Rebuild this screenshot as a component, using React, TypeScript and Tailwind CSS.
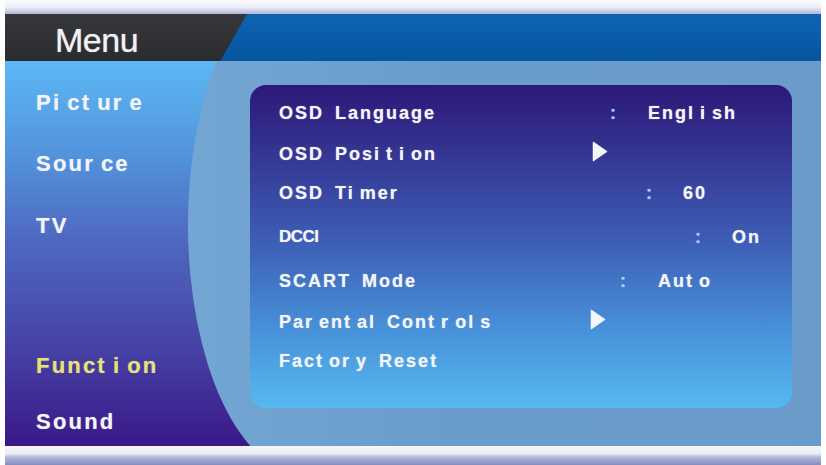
import React from 'react'

// OSD font quirk: narrow glyphs get a wider advance
function Osd({ text, gap }: { text: string; gap: string }) {
  return (
    <>
      {text.split('').map((ch, i) => {
        const next = text[i + 1]
        const wide = 'itlr'.includes(ch) && next !== undefined && next !== ' '
        return wide ? (
          <span key={i} className={gap}>
            {ch}
          </span>
        ) : (
          <React.Fragment key={i}>{ch}</React.Fragment>
        )
      })}
    </>
  )
}

function Arrow() {
  return (
    <svg width="16" height="21" viewBox="0 0 16 21" className="-mt-[5px]">
      <path d="M1.5 1.5 L14.5 10.5 L1.5 19.5 Z" fill="#f4f6fb" stroke="#f4f6fb" strokeWidth="1.5" strokeLinejoin="round" />
    </svg>
  )
}

type Row = {
  label: string
  top: string
  labelBox?: string
  colonBox?: string
  value?: string
  arrow?: boolean
  small?: boolean
}

const rows: Row[] = [
  { label: 'OSD Language', top: 'mt-0', labelBox: 'w-[331px]', colonBox: 'w-[38px]', value: 'English' },
  { label: 'OSD Position', top: 'mt-[1px]', labelBox: 'w-[313px]', arrow: true },
  { label: 'OSD Timer', top: '-mt-[1px]', labelBox: 'w-[367px]', colonBox: 'w-[37px]', value: '60' },
  { label: 'DCCI', top: 'mt-[4px]', labelBox: 'w-[416px]', colonBox: 'w-[37px]', value: 'On', small: true },
  { label: 'SCART Mode', top: 'mt-[4px]', labelBox: 'w-[341px]', colonBox: 'w-[38px]', value: 'Auto' },
  { label: 'Parental Controls', top: 'mt-[1px]', labelBox: 'w-[311px]', arrow: true },
  { label: 'Factory Reset', top: '-mt-[1px]' },
]

const sideItems = [
  { name: 'Picture', cls: 'mt-0 text-[#f3f4fa]' },
  { name: 'Source', cls: 'mt-[33px] text-[#f3f4fa]' },
  { name: 'TV', cls: 'mt-[34px] text-[#f3f4fa]' },
  { name: 'Function', cls: 'mt-[112px] text-[#e8e26e]' },
  { name: 'Sound', cls: 'mt-[28px] text-[#f3f4fa]' },
]

function App() {
  return (
    <div className="w-[826px] h-[465px] bg-white flex flex-col overflow-hidden font-['Liberation_Sans',Arial,sans-serif]">
      {/* top bezel */}
      <div className="h-[14px] mx-[5px] bg-gradient-to-b from-[#fbfbfe] via-[#eeeef8] to-[#b2b6d8]" />

      {/* title bar */}
      <div className="h-[47px] mx-[5px] flex bg-gradient-to-b from-[#0f63b3] to-[#0556a0]">
        <div className="w-[242px] h-full bg-gradient-to-b from-[#36373b] to-[#2b2c30] [clip-path:polygon(0_0,100%_0,89%_100%,0_100%)] flex items-center pl-[50px] pt-[4px]">
          <span className="text-[34px] leading-none tracking-[-0.5px] text-[#f1f1f3] [text-shadow:0_0_1px_rgba(255,255,255,0.7)]">
            Menu
          </span>
        </div>
      </div>

      {/* body */}
      <div className="h-[385px] mx-[5px] flex overflow-hidden bg-[linear-gradient(to_bottom,#5cb8f4,#5394dc_24%,#4d66be_48%,#4746a8_72%,#3a1888)]">
        <nav className="w-[183px] flex-none flex flex-col pt-[27px] pl-[31px]">
          {sideItems.map((s) => (
            <div
              key={s.name}
              className={`${s.cls} h-[28px] flex items-center text-[22px] font-bold tracking-[2.2px] [text-shadow:0_0_1px_rgba(255,255,255,0.5)]`}
            >
              <Osd text={s.name} gap="mr-[6px]" />
            </div>
          ))}
        </nav>

        <main className="flex-1 self-start -mt-[86px] h-[500px] rounded-tl-[117px_250px] rounded-bl-[117px_250px] bg-[linear-gradient(to_right,#74a6d4,#6b9dcc_40%,#6a9bca)] pt-[110px] pl-[62px] pr-[29px]">
          <section className="h-[323px] rounded-[16px] bg-[linear-gradient(to_bottom,#2c1878,#33318e_18%,#3d5db4_48%,#4790d8_75%,#56b9ef)] pt-[8px] pl-[29px]">
            {rows.map((r) => (
              <div
                key={r.label}
                className={`${r.top} h-[40px] flex items-center text-[#f4f5fa] font-bold [text-shadow:0_0_1px_rgba(255,255,255,0.6)]`}
              >
                <div
                  className={`${r.labelBox ?? ''} flex-none whitespace-nowrap [word-spacing:4px] ${
                    r.small ? 'text-[17px] tracking-[-0.5px]' : 'text-[18px] tracking-[2px]'
                  }`}
                >
                  <Osd text={r.label} gap="mr-[5px]" />
                </div>
                {r.arrow && <Arrow />}
                {r.value && (
                  <>
                    <div className={`${r.colonBox} flex-none text-[18px] text-[#a9cdf5]`}>:</div>
                    <div className="text-[18px] tracking-[2px] whitespace-nowrap">
                      <Osd text={r.value} gap="mr-[5px]" />
                    </div>
                  </>
                )}
              </div>
            ))}
          </section>
        </main>
      </div>

      {/* bottom bezel */}
      <div className="h-[19px] mx-[5px] bg-[linear-gradient(to_bottom,#f6f6fb,#ececf6_40%,#b0b6d8_60%,#858dc0)]" />
    </div>
  )
}

export default App
